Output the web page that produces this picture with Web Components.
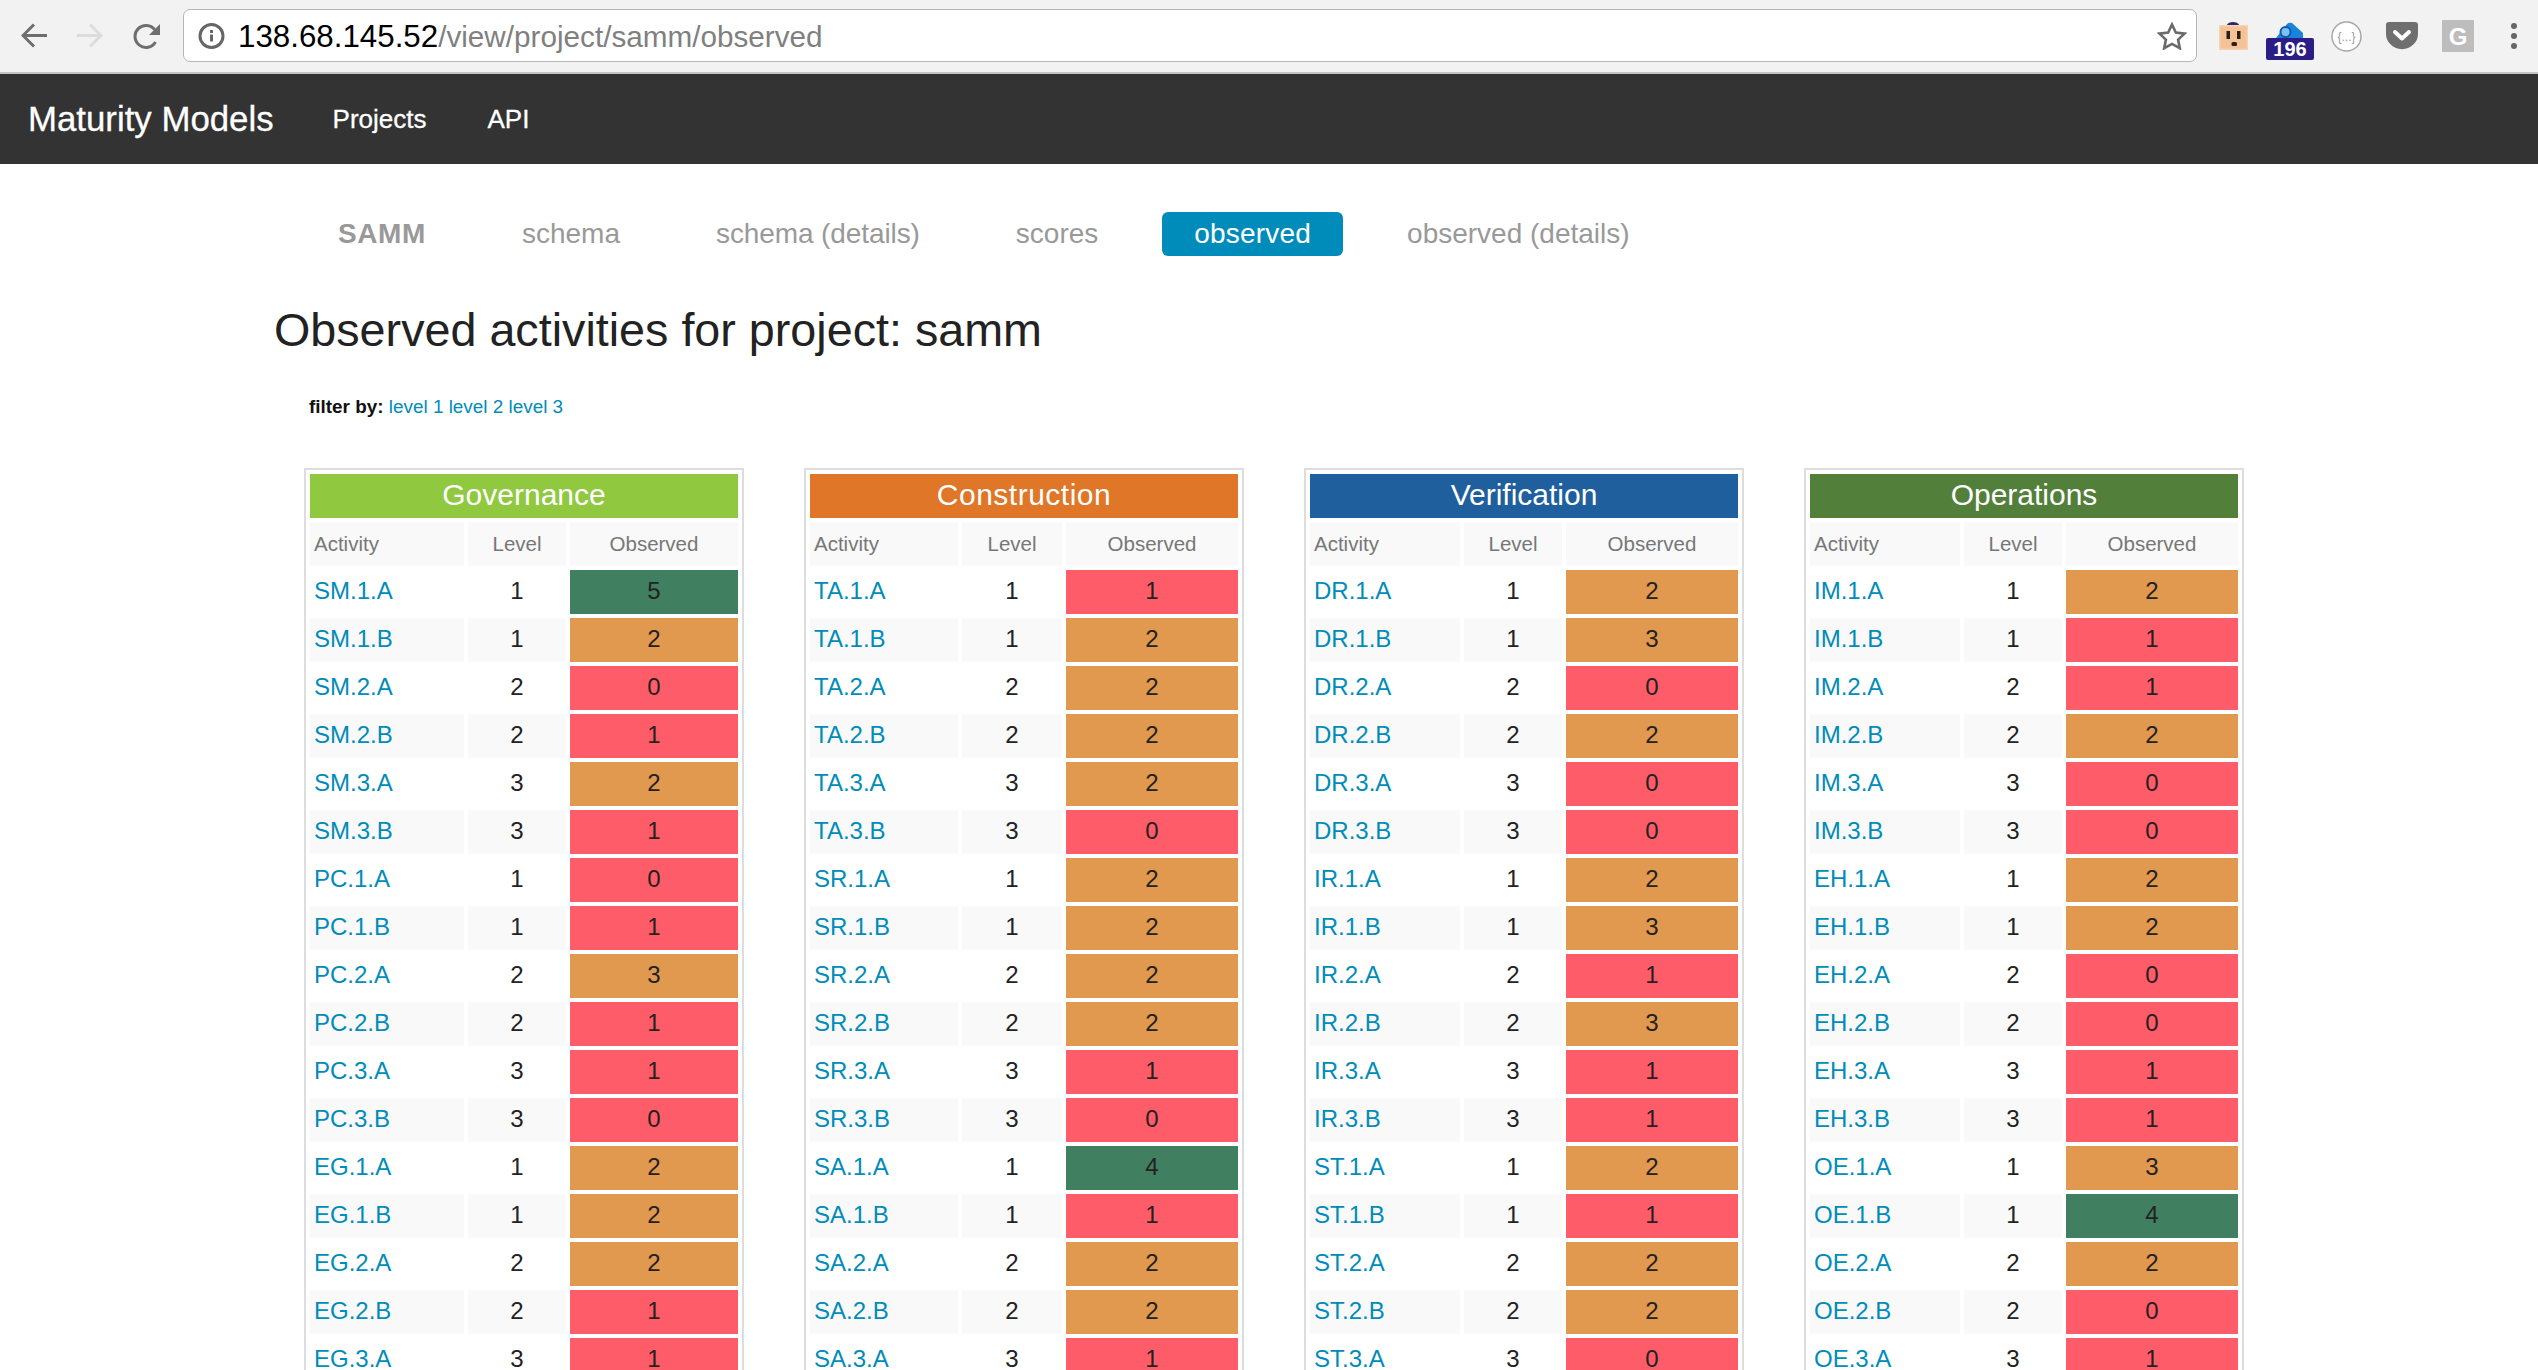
<!DOCTYPE html>
<html lang="en">
<head>
<meta charset="utf-8">
<title>Maturity Models</title>
<style>
  html, body { margin: 0; height: 100%; overflow: hidden; background: #fff; }
  body { font-family: "Liberation Sans", Arial, sans-serif; color: #222; }
  .boards { display: flex; gap: 60px; margin: 49px 0 0 304px; }
</style>
</head>
<body>
<browser-bar url-host="138.68.145.52" url-path="/view/project/samm/observed"></browser-bar>
<top-bar brand="Maturity Models">
  <a slot="links">Projects</a>
  <a slot="links">API</a>
</top-bar>
<sub-nav>
  <nav-item strong style="letter-spacing:.6px">SAMM</nav-item>
  <nav-item>schema</nav-item>
  <nav-item style="letter-spacing:-.1px">schema (details)</nav-item>
  <nav-item>scores</nav-item>
  <nav-item active style="letter-spacing:.2px">observed</nav-item>
  <nav-item>observed (details)</nav-item>
</sub-nav>
<page-title>Observed activities for project: samm</page-title>
<filter-line></filter-line>
<div class="boards">
  <function-table name="Governance" color="#90c93f" cols="154,98,168"
    practices="SM,PC,EG" scores="5,2,0,1,2,1,0,1,3,1,1,0,2,2,2,1,1"></function-table>
  <function-table name="Construction" name-spacing=".5" color="#e07628" cols="148,100,172"
    practices="TA,SR,SA" scores="1,2,2,2,2,0,2,2,2,2,1,0,4,1,2,2,1"></function-table>
  <function-table name="Verification" color="#1f5f9e" cols="150,98,172"
    practices="DR,IR,ST" scores="2,3,0,2,0,0,2,3,1,3,1,1,2,1,2,2,0"></function-table>
  <function-table name="Operations" color="#52803b" cols="150,98,172"
    practices="IM,EH,OE" scores="2,1,1,2,0,0,2,2,0,0,1,1,3,4,2,0,1"></function-table>
</div>

<script>
class BrowserBar extends HTMLElement {
  constructor() {
    super();
    this.attachShadow({mode: "open"});
  }
  connectedCallback() {
    this.shadowRoot.innerHTML = `
    <style>
      :host { display: flex; align-items: flex-start; box-sizing: border-box; height: 74px;
        background: #f2f2f2; border-bottom: 2px solid #c4c4c4; }
      svg { display: block; flex: none; }
      .url { flex: none; box-sizing: border-box; width: 2014px; height: 53px; margin: 9px 0 0 23px;
        display: flex; align-items: center; padding: 0 9px 0 14px; background: #fff;
        border: 1px solid #b5b5b5; border-radius: 7px; font-size: 29.700px; color: #808080; }
      .url b { font-weight: normal; font-size: 31.300px; color: #000; }
      .addr { flex: 1; margin-left: 13px; padding-top: 2px; white-space: nowrap; }
    </style>
    <svg style="margin:23px 0 0 21px" width="26" height="25" viewBox="0 0 26 25" fill="none" stroke="#6e6e6e" stroke-width="3"><path d="M26 12.5H3M13 1.5 2 12.5l11 11"/></svg>
    <svg style="margin:23px 0 0 30px" width="26" height="25" viewBox="0 0 26 25" fill="none" stroke="#dcdcdc" stroke-width="3"><path d="M0 12.5h23M13 1.5l11 11-11 11"/></svg>
    <svg style="margin:23px 0 0 30px" width="27" height="26" viewBox="0 0 27 26" fill="none"><path d="M22.5 19a11 11 0 1 1 -.8-12.4" stroke="#6e6e6e" stroke-width="3"/><path d="M27 1v11H16z" fill="#6e6e6e"/></svg>
    <div class="url">
      <svg width="27" height="26" viewBox="0 0 27 26" fill="none"><circle cx="13.5" cy="13" r="11.5" stroke="#666" stroke-width="3"/><path d="M13.5 11.5v7M13.5 7v3" stroke="#666" stroke-width="3"/></svg>
      <span class="addr"><b>${this.getAttribute("url-host")}</b>${this.getAttribute("url-path")}</span>
      <svg width="30" height="28" viewBox="0 0 30 28" fill="none"><path d="M15 2.5l3.8 8 8.7 1.1-6.4 6 1.7 8.6-7.8-4.3-7.8 4.3 1.7-8.6-6.4-6 8.7-1.1z" stroke="#6a6a6a" stroke-width="2.6" stroke-linejoin="miter"/></svg>
    </div>
    <svg style="margin:22px 0 0 22px" width="29" height="28" viewBox="0 0 29 28"><rect y="3" width="29" height="25" fill="#f8d2ae"/><rect x="1.500" y="4.500" width="26" height="22" fill="#f4c295"/><path d="M8 3a6 3 0 0 1 12 0z" fill="#2c2a6c"/><rect x="7.500" y="9" width="3.500" height="8" fill="#2a2018"/><rect x="18" y="9" width="3.500" height="8" fill="#2a2018"/><rect x="12.500" y="20" width="5.500" height="4" rx="1.500" fill="#2a2018"/></svg>
    <svg style="margin:22px 0 0 18px" width="48" height="38" viewBox="0 0 48 38"><path d="M10 16 21 2Q23 0 26 1L37 11v5z" fill="#1a83db"/><circle cx="19.500" cy="10" r="5" fill="#7fc0f2" stroke="#0d5ca8" stroke-width="2"/><rect y="16" width="48" height="22" rx="2" fill="#2b1d86"/><text x="24" y="34" text-anchor="middle" fill="#fff" font-family="Liberation Sans, sans-serif" font-weight="bold" font-size="20">196</text></svg>
    <svg style="margin:21px 0 0 17px" width="31" height="31" viewBox="0 0 31 31"><circle cx="15.500" cy="15.500" r="14.500" fill="#fff" stroke="#a8a8a8" stroke-width="1.500"/><text x="15.500" y="20" text-anchor="middle" fill="#999" font-family="Liberation Sans, sans-serif" font-size="12">{...}</text></svg>
    <svg style="margin:22px 0 0 24px" width="32" height="28" viewBox="0 0 32 28"><path d="M0 3Q0 0 3 0H29Q32 0 32 3V12A16 16 0 0 1 0 12Z" fill="#6f6f6f" transform="scale(1 .97)"/><path d="M9 10l7 6.500L23 10" fill="none" stroke="#fff" stroke-width="4" stroke-linecap="round" stroke-linejoin="round"/></svg>
    <svg style="margin:20px 0 0 24px" width="32" height="32" viewBox="0 0 32 32"><rect width="32" height="32" rx="1" fill="#bdbdbd"/><text x="16" y="25" text-anchor="middle" fill="#fff" font-family="Liberation Sans, sans-serif" font-weight="bold" font-size="24">G</text></svg>
    <svg style="margin:23px 0 0 34px" width="12" height="26" viewBox="0 0 12 26" fill="#666"><circle cx="6" cy="3" r="3"/><circle cx="6" cy="13" r="3"/><circle cx="6" cy="23" r="3"/></svg>
    `;
  }
}
customElements.define("browser-bar", BrowserBar);

class TopBar extends HTMLElement {
  constructor() {
    super();
    this.attachShadow({mode: "open"});
  }
  connectedCallback() {
    this.shadowRoot.innerHTML = `
    <style>
      :host { display: flex; align-items: center; gap: 59px; box-sizing: border-box; height: 90px;
        padding: 0 0 0 28px; background: #333; color: #fff; }
      .brand { font-size: 34.800px; -webkit-text-stroke: .3px #fff; }
      .links { display: flex; gap: 61px; font-size: 26px; -webkit-text-stroke: .3px #fff; }
      ::slotted(a) { color: #fff; }
    </style>
    <span class="brand">${this.getAttribute("brand")}</span>
    <div class="links"><slot name="links"></slot></div>
    `;
  }
}
customElements.define("top-bar", TopBar);

class SubNav extends HTMLElement {
  constructor() {
    super();
    this.attachShadow({mode: "open"});
  }
  connectedCallback() {
    this.shadowRoot.innerHTML = `
    <style>
      :host { display: flex; gap: 32px; margin: 48px 0 0 306px; }
    </style>
    <slot></slot>
    `;
  }
}
customElements.define("sub-nav", SubNav);

class NavItem extends HTMLElement {
  constructor() {
    super();
    this.attachShadow({mode: "open"});
  }
  connectedCallback() {
    this.shadowRoot.innerHTML = `
    <style>
      :host { display: block; box-sizing: border-box; height: 44px; line-height: 44px; padding: 0 32px;
        font-size: 28px; color: #999; border-radius: 6px; white-space: nowrap; }
      :host([strong]) { font-weight: bold; }
      :host([active]) { background: #008cba; color: #fff; }
    </style>
    <slot></slot>
    `;
  }
}
customElements.define("nav-item", NavItem);

class PageTitle extends HTMLElement {
  constructor() {
    super();
    this.attachShadow({mode: "open"});
  }
  connectedCallback() {
    this.shadowRoot.innerHTML = `
    <style>
      :host { display: block; margin: 46px 0 0 274px; font-size: 46.700px; line-height: 56px; color: #222; }
    </style>
    <slot></slot>
    `;
  }
}
customElements.define("page-title", PageTitle);

class FilterLine extends HTMLElement {
  constructor() {
    super();
    this.attachShadow({mode: "open"});
  }
  connectedCallback() {
    this.shadowRoot.innerHTML = `
    <style>
      :host { display: block; margin: 37px 0 0 309px; font-size: 18.900px; line-height: 24px; color: #222; }
      b { color: #111; }
      a { color: #008cba; }
    </style>
    <b>filter by:</b> <a>level 1</a> <a>level 2</a> <a>level 3</a>
    `;
  }
}
customElements.define("filter-line", FilterLine);

class FunctionTable extends HTMLElement {
  constructor() {
    super();
    this.attachShadow({mode: "open"});
  }
  scoreColor(score) {
    if (score >= 4) return "#417f61";
    if (score >= 2) return "#e0994e";
    return "#ff5c69";
  }
  // six activities per practice: 1.A 1.B 2.A 2.B 3.A 3.B
  buildRows() {
    const practices = this.getAttribute("practices").split(",");
    const scores = this.getAttribute("scores").split(",");
    const rows = [];
    scores.forEach((score, i) => {
      const level = Math.floor((i % 6) / 2) + 1;
      const code = practices[Math.floor(i / 6)] + "." + level + "." + (i % 2 ? "B" : "A");
      rows.push(`<tr>
        <td class="act"><a>${code}</a></td>
        <td class="lvl">${level}</td>
        <td class="obs" style="background:${this.scoreColor(+score)}">${score}</td>
      </tr>`);
    });
    return rows.join("");
  }
  connectedCallback() {
    const cols = this.getAttribute("cols").split(",");
    const spacing = this.getAttribute("name-spacing") || "0";
    this.shadowRoot.innerHTML = `
    <style>
      :host { display: block; flex: none; width: 440px; }
      table { box-sizing: border-box; width: 440px; table-layout: fixed; border-collapse: separate;
        border-spacing: 4px; border: 2px solid #ddd; font-size: 24px; color: #222; }
      th, td { box-sizing: border-box; height: 44px; padding: 0 0 2px; text-align: center; font-weight: normal; }
      .name { background: ${this.getAttribute("color")}; color: #fff; font-size: 30px; letter-spacing: ${spacing}px; }
      .head th { background: #f9f9f9; color: #777; font-size: 20.500px; padding-bottom: 0; }
      .head th:first-child, .act { text-align: left; padding-left: 4px; }
      tbody tr:nth-child(even) .act, tbody tr:nth-child(even) .lvl { background: #f9f9f9; }
      a { color: #008cba; }
    </style>
    <table>
      <colgroup>${cols.map(w => `<col style="width:${w}px">`).join("")}</colgroup>
      <thead>
        <tr><th class="name" colspan="3">${this.getAttribute("name")}</th></tr>
        <tr class="head"><th>Activity</th><th>Level</th><th>Observed</th></tr>
      </thead>
      <tbody>${this.buildRows()}</tbody>
    </table>
    `;
  }
}
customElements.define("function-table", FunctionTable);
</script>
</body>
</html>
